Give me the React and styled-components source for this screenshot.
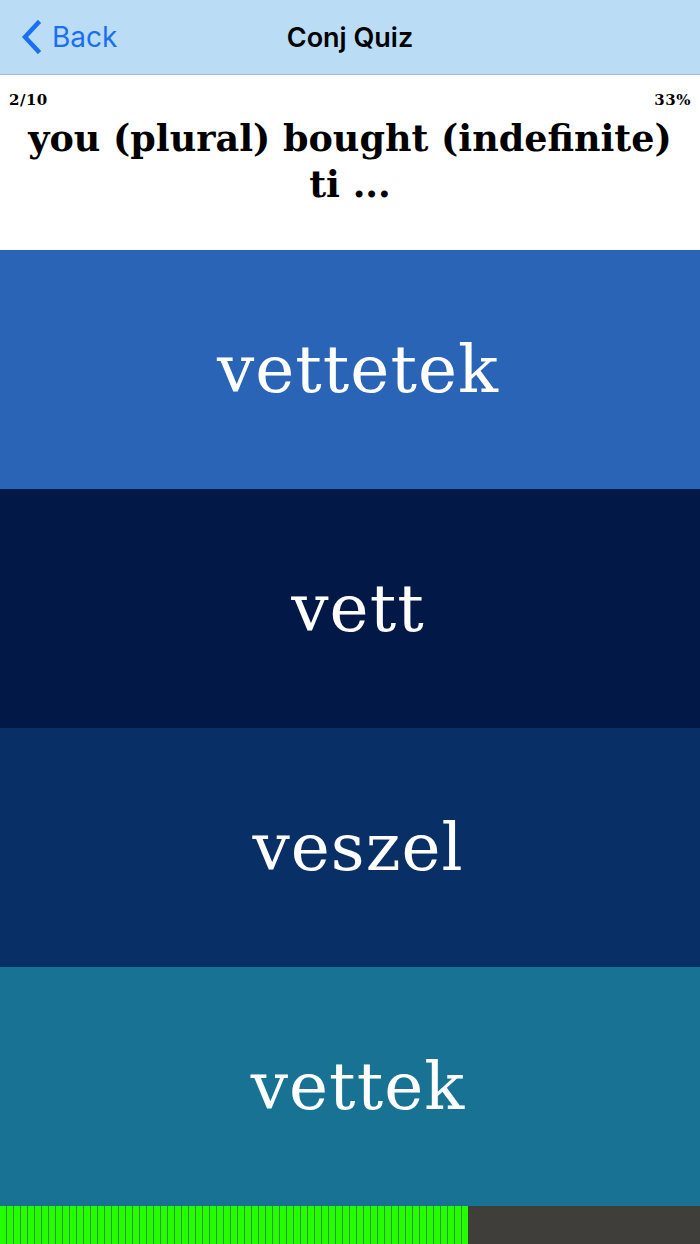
import React from 'react';
import styled, { createGlobalStyle } from 'styled-components';

const GlobalStyle = createGlobalStyle`
	html, body {
		margin: 0;
		padding: 0;
	}
	body {
		font-family: Inter, 'Noto Sans', sans-serif;
	}
`;

const Screen = styled.div`
	width: 700px;
	height: 1244px;
	display: flex;
	flex-direction: column;
	overflow: hidden;
`;

const NavBar = styled.div`
	height: 74px;
	flex-shrink: 0;
	background: #bbdcf5;
	border-bottom: 1px solid #a3bfd5;
	display: grid;
	grid-template-columns: 1fr auto 1fr;
	align-items: center;
`;

const BackButton = styled.div`
	display: flex;
	align-items: center;
	gap: 10px;
	padding-left: 20px;
	color: #1a6ff2;
	font-size: 28px;
	font-family: Inter, 'Noto Sans', sans-serif;
`;

const Title = styled.div`
	font-size: 27px;
	font-weight: 600;
	color: #000;
`;

const QuestionPanel = styled.div`
	height: 175px;
	flex-shrink: 0;
	background: #fff;
	padding: 17px 9px 0;
	box-sizing: border-box;
	font-family: 'DejaVu Serif', 'Liberation Serif', serif;
	font-weight: bold;
`;

const StatusRow = styled.div`
	display: flex;
	justify-content: space-between;
	font-size: 15px;
	line-height: 16px;
	letter-spacing: 0.5px;
`;

const Question = styled.div`
	text-align: center;
	font-size: 36.5px;
	line-height: 46px;
	margin-top: 8px;
`;

const Answer = styled.div`
	flex: 1;
	display: flex;
	align-items: center;
	justify-content: center;
	padding-left: 16px;
	background: ${(p) => p.$bg};
	color: #fff;
	font-family: 'DejaVu Serif', 'Liberation Serif', serif;
	font-size: 66px;
	letter-spacing: 1px;
`;

const Progress = styled.div`
	height: 38px;
	flex-shrink: 0;
	background: #403e3b;
	display: flex;
`;

const ProgressFill = styled.div`
	height: 100%;
	background: repeating-linear-gradient(90deg, #22ff00 0 6px, #3f8d2e 6px 7px);
`;

const answers = [
	{ text: 'vettetek', bg: '#2a64b7' },
	{ text: 'vett', bg: '#021846' },
	{ text: 'veszel', bg: '#082f66' },
	{ text: 'vettek', bg: '#177293' },
];

export default function App() {
	return (
		<>
			<GlobalStyle />
			<Screen>
				<NavBar>
					<BackButton>
						<svg width="22" height="34" viewBox="0 0 22 34">
							<path d="M18 3 L5 17 L18 31" fill="none" stroke="#1a6ff2" strokeWidth="4.5" strokeLinecap="square" />
						</svg>
						Back
					</BackButton>
					<Title>Conj Quiz</Title>
					<div />
				</NavBar>
				<QuestionPanel>
					<StatusRow>
						<span>2/10</span>
						<span>33%</span>
					</StatusRow>
					<Question>
						you (plural) bought (indefinite)
						<br />
						ti ...
					</Question>
				</QuestionPanel>
				{answers.map((a) => (
					<Answer key={a.text} $bg={a.bg}>
						{a.text}
					</Answer>
				))}
				<Progress>
					<ProgressFill style={{ width: `${(468 / 700) * 100}%` }} />
				</Progress>
			</Screen>
		</>
	);
}
